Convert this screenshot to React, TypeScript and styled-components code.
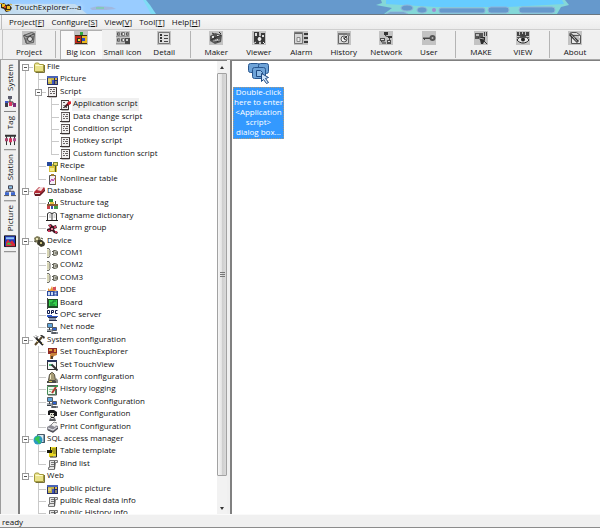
import React from "react";
import styled, { createGlobalStyle, css } from "styled-components";

const GlobalStyle = createGlobalStyle`
  *, *::before, *::after { box-sizing: border-box; }
  html, body { margin: 0; padding: 0; }
  body, button {
    font-family: "Open Sans", "Noto Sans", sans-serif;
    font-size: 8px;
    color: #111;
  }
  button { border: 0; background: none; padding: 0; margin: 0; }
`;

const Window = styled.div`
  display: flex;
  flex-direction: column;
  height: 100vh;
  background: #f0f0f0;
  overflow: hidden;
`;

/* ---------- title bar ---------- */

const TitleBar = styled.header`
  display: grid;
  height: 15px;
  flex: none;
  background: #6699cc;
  border-bottom: 1px solid #6b7780;
  overflow: hidden;
  > * { grid-area: 1 / 1; }
`;

const TitleArt = styled.div`
  display: flex;
  justify-content: space-between;
  min-width: 0;
  padding-right: 30px;
`;

const TitleText = styled.h1`
  display: flex;
  align-items: center;
  gap: 3px;
  margin: 0;
  font-size: 8px;
  font-weight: 400;
  line-height: 14px;
  color: #111;
`;

const TitleGlow = styled.span`
  text-shadow: 0 0 4px #fff, 0 0 6px #e6f4ff;
`;

/* ---------- menu ---------- */

const MenuBar = styled.nav`
  display: flex;
  align-items: center;
  gap: 7px;
  flex: none;
  height: 15px;
  padding-left: 1px;
  background: linear-gradient(#f8f8f8, #ececec);
  border-bottom: 1px solid #cfcfcf;
`;

const Grip = styled.span`
  width: 1px;
  height: 100%;
  background: #bdbdbd;
`;

const MenuItem = styled.button`
  line-height: 14px;
  white-space: nowrap;
`;

/* ---------- toolbar ---------- */

const ToolBar = styled.div`
  display: flex;
  flex: none;
  height: 30px;
  padding: 0 0 0 2px;
  background: #f0f0f0;
  border-bottom: 1px solid #a8a8a8;
`;

const ToolGroup = styled.div<{ $width: number }>`
  display: flex;
  width: ${(p) => p.$width}px;
  flex: none;
`;

const ToolButton = styled.button<{ $active?: boolean }>`
  display: flex;
  flex: 1 1 0;
  min-width: 0;
  flex-direction: column;
  align-items: center;
  justify-content: center;
  gap: 1px;
  line-height: 12px;
  white-space: nowrap;
  ${(p) =>
    p.$active &&
    css`
      background: #f9f9f9;
      box-shadow: inset 1px 1px #b0b0b0;
    `}
`;

const Divider = styled.span`
  width: 10px;
  margin: 1px 0;
  flex: none;
  background: linear-gradient(#b4b4b4, #b4b4b4) 5px 0 / 1px 100% no-repeat;
`;

const ToolStart = styled.span`
  width: 6px;
  border-left: 1px solid #c4c4c4;
  flex: none;
`;

/* ---------- body ---------- */

const Body = styled.main`
  display: flex;
  flex: 1;
  min-height: 0;
`;

const SideTabs = styled.div`
  display: flex;
  flex-direction: column;
  flex: none;
  width: 18px;
  padding: 0 2px 0 3px;
  border-left: 1px solid #9c9c9c;
`;

const SideTab = styled.button`
  display: flex;
  writing-mode: vertical-rl;
  transform: rotate(180deg);
  align-items: center;
  justify-content: flex-end;
  gap: 4px;
  padding: 4px 0;
  line-height: 12px;
  border-top: 1px solid #808080;
  svg { transform: rotate(180deg); }
`;

const TreePanel = styled.section`
  display: flex;
  flex: none;
  width: 209px;
  border: 1px solid #808080;
  border-left-width: 2px;
  border-bottom: 0;
  border-right: 0;
  background: #fff;
`;

const TreeView = styled.div`
  flex: 1;
  min-width: 0;
  overflow-x: hidden;
  overflow-y: auto;
  scrollbar-width: none;
`;

const TreeList = styled.ul`
  display: grid;
  grid-auto-rows: 12px 13px 12px 13px 12px;
  list-style: none;
  margin: 0;
  padding: 0;
`;

const TreeRow = styled.li`
  display: flex;
  align-items: stretch;
  min-width: 0;
`;

const lineV = "linear-gradient(#c9c9c9, #c9c9c9) 5px 0 / 1px 100% no-repeat";
const guides: Record<string, string> = {
  " ": "none",
  "|": lineV,
  "+": `${lineV}, linear-gradient(#c9c9c9, #c9c9c9) 5px 6px / 8px 1px no-repeat`,
  L: "linear-gradient(#c9c9c9, #c9c9c9) 5px 0 / 1px 7px no-repeat, linear-gradient(#c9c9c9, #c9c9c9) 5px 6px / 8px 1px no-repeat",
  r: "linear-gradient(#c9c9c9, #c9c9c9) 5px 6px / 1px 8px no-repeat, linear-gradient(#c9c9c9, #c9c9c9) 5px 6px / 8px 1px no-repeat",
};

const Guide = styled.span<{ $kind: string }>`
  display: flex;
  align-items: center;
  flex: none;
  width: 13px;
  background: ${(p) => guides[p.$kind]};
`;

const Toggle = styled.button`
  width: 7px;
  height: 7px;
  margin-left: 2px;
  border: 1px solid #989898;
  background: linear-gradient(#555, #555) 1px 2px / 3px 1px no-repeat #fff;
`;

const TreeIcon = styled.span`
  display: flex;
  align-items: center;
  justify-content: center;
  flex: none;
  width: 12px;
  margin-right: 1px;
`;

const TreeLabel = styled.span<{ $active?: boolean }>`
  padding: 0 1px;
  line-height: 10px;
  white-space: nowrap;
  background: ${(p) => (p.$active ? "#f0f0f0" : "transparent")};
`;

const ScrollBar = styled.div`
  display: flex;
  flex-direction: column;
  flex: none;
  width: 10px;
  background: #f2f2f2;
`;

const ScrollArrow = styled.button<{ $up?: boolean }>`
  display: flex;
  align-items: center;
  justify-content: center;
  height: 12px;
  flex: none;
  &::after {
    content: "";
    border: 2px solid transparent;
    border-${(p) => (p.$up ? "bottom" : "top")}: 3px solid #333;
    border-${(p) => (p.$up ? "top" : "bottom")}: 0;
  }
`;

const ScrollTrack = styled.div`
  flex: 1;
  min-height: 0;
`;

const ScrollThumb = styled.div`
  display: flex;
  flex-direction: column;
  align-items: center;
  justify-content: center;
  gap: 1px;
  height: 94%;
  border: 1px solid #a2a2a2;
  border-radius: 1px;
  background: linear-gradient(90deg, #f6f6f6, #e4e4e4 45%, #cfcfcf 55%, #dadada);
`;

const ThumbMark = styled.span`
  width: 5px;
  height: 1px;
  background: #777;
`;

const Splitter = styled.div`
  flex: none;
  width: 3px;
  background: #f0f0f0;
`;

const Content = styled.section`
  flex: 1;
  min-width: 0;
  background: #fff;
  border-top: 1px solid #808080;
  border-left: 2px solid #808080;
`;

const Shortcut = styled.button`
  display: flex;
  flex-direction: column;
  align-items: center;
  gap: 2px;
  width: 51px;
  margin-left: 1px;
  padding-top: 1px;
`;

const ShortcutLabel = styled.span`
  width: 100%;
  padding: 0 0 2px;
  line-height: 10px;
  text-align: center;
  color: #fff;
  background: #3399ff;
  outline: 1px dotted #a99a80;
  outline-offset: -1px;
`;

const StatusBar = styled.footer`
  flex: none;
  height: 14px;
  padding-left: 2px;
  line-height: 13px;
  background: #f0f0f0;
  border-top: 1px solid #fafafa;
  border-bottom: 1px solid #8c8c8c;
`;

/* ---------- icons ---------- */

const S = ({ size = 12, children }: { size?: number; children: React.ReactNode }) => (
  <svg width={size} height={size} viewBox={`0 0 ${size} ${size}`} aria-hidden="true">
    {children}
  </svg>
);

const P = ({ d, f = "none", s, w = 1 }: { d: string; f?: string; s?: string; w?: number }) => (
  <path d={d} fill={f} stroke={s} strokeWidth={w} />
);

const icons: Record<string, React.ReactNode> = {
  folder: (
    <S>
      <P d="M1.5 10.5V3.5l1-1.5h3l1 1.5h4v7z" f="#e9e28a" s="#a39a3c" />
      <P d="M2.5 4.5h7" s="#fdfad0" />
      <P d="M11.5 4v7.5h-9" s="#77713a" />
    </S>
  ),
  picture: (
    <S>
      <P d="M1 2h11v9H1z" f="#26306e" />
      <P d="M2 4h6v6H2z" f="#c2b04a" />
      <P d="M1 2h11v2H1z" f="#4a64b8" />
      <P d="M2 5h3v3H2z" f="#e2cf70" />
      <P d="M6 6h2v4H6z" f="#4057c0" />
      <P d="M9 4h2v2H9z" f="#e1b83c" />
      <P d="M9 7h2v3H9z" f="#8e8a70" />
    </S>
  ),
  script: (
    <S>
      <P d="M2.5 1.5h8v9.5h-8z" f="#f2f0f0" s="#8a8484" />
      <P d="M4 3.5h2M7 3.5h2M4 5.5h1M6 5.5h3M4 7.5h2M7 7.5h2" s="#6a6464" />
      <P d="M10.5 1v10M1 10.5h9" s="#3c3434" />
      <P d="M2 1.5h9" s="#5a5252" />
    </S>
  ),
  scriptEdit: (
    <S>
      <P d="M2.5 1.5h7v9.5h-7z" f="#f2f0f0" s="#6a6464" />
      <P d="M4 3.5h2M4 8.5h2M7 8.5h1" s="#555" />
      <P d="M1 10.5h9M2 1.5h8M9.5 6v5" s="#3c3434" />
      <P d="M6 8l4-4" s="#4a1820" w={2} />
      <P d="M9 5l3-2" s="#d9202c" w={3} />
      <P d="M4.5 6l2 2" s="#222" />
    </S>
  ),
  bind: (
    <S>
      <P d="M3.5 2.5h8v2h-2l-1 7h-6v-2h1z" f="#e4e4e4" s="#777" />
      <P d="M5 4.5h4M5 6.5h3M4 8.5h4" s="#777" />
      <P d="M8.5 3v8" s="#555" />
    </S>
  ),
  recipe: (
    <S>
      <P d="M3 3h8v8H3z" f="#d9c43c" />
      <P d="M1 1h5v4H1z" f="#274a9c" />
      <P d="M4 7h4v3H4z" f="#f2ea8a" />
      <P d="M7 1h5v4H7z" f="#7b8634" />
      <P d="M8 2h3v2H8z" f="#e9db5e" />
      <P d="M9.5 5v6" s="#4e5620" />
    </S>
  ),
  nonlinear: (
    <S>
      <P d="M3.5 2.5h6v9h-6z" f="#f6eef6" s="#555" />
      <P d="M5 1h3v2H5z" f="#a67e30" />
      <P d="M4 9l2-3 1 2 2-3" s="#b3329c" />
      <P d="M9.5 3v9" s="#8a6a34" />
    </S>
  ),
  database: (
    <S>
      <P d="M1 7l5-5h5l1 2-5 6H2z" f="#b32a35" />
      <P d="M4 5l3-3h4L8 6z" f="#f3dcdc" />
      <P d="M1 8l6 1 5-5v2l-5 5H2z" f="#651820" />
      <P d="M2 8.5h5" s="#e8cccc" />
    </S>
  ),
  structure: (
    <S>
      <P d="M3 1h4v3H3z" f="#2b8c3a" />
      <P d="M2.5 4v7M9.5 3v8" s="#444" />
      <P d="M1 6h11v2H1z" f="#8a5a34" />
      <P d="M4 4h4v2H4z" f="#e5c440" />
      <P d="M8 8h4v3H8z" f="#3f9c4c" />
      <P d="M1 8h3v3H1z" f="#c9444a" />
      <P d="M5 8h2v3H5z" f="#3a55b0" />
    </S>
  ),
  book: (
    <S>
      <P d="M1.5 3.5l2-1 2.5 1 2.5-1 2 1v7h-9z" f="#fff" s="#333" />
      <P d="M6 3v7" s="#333" />
      <P d="M0 10.5h12" s="#222" />
      <P d="M3 5h2M7.5 5h2M3 7h2M7.5 7h2" s="#aaa" />
    </S>
  ),
  alarmGroup: (
    <S>
      <P d="M2 2l3-1 2 2 3-1 1 3-3 1 1 2 3 1-1 2-3-1-2-2-2 1-3-1v-2l3-1z" f="#3c1722" />
      <P d="M3 2h2v2H3zM8 3h2v2H8zM9 8h2v2H9zM2 7h2v2H2z" f="#c5375b" />
      <P d="M5 5h2v2H5z" f="#e9869c" />
    </S>
  ),
  device: (
    <S>
      <P d="M1 3l3-2 3 1 1 3-3 3-3-1z" f="#807d5a" />
      <P d="M5 5l4 0 3 3-1 3-3 1-4-3z" f="#3b3929" />
      <P d="M3 3h2v2H3z" f="#e9e4b4" />
      <P d="M7 7h2v2H7z" f="#c9c07e" />
      <P d="M1 6l2 1M8 3l2 1M10 9l2 1" s="#4b4838" />
    </S>
  ),
  com: (
    <S>
      <P d="M1 1.5h2l1 2v5l-1 2H1" f="#e4e2cc" s="#70706a" />
      <P d="M2 3v6" s="#c9c79a" />
      <P d="M7.5 3.5h2l2 1v3l-2 1h-2z" f="#b9b9ad" s="#66665c" />
      <P d="M6 4.5h1M6 7.5h1M9 6h3" s="#55554d" />
    </S>
  ),
  dde: (
    <S>
      <P d="M2 3l2 2 2-4 1 3 3-3-1 4 3 1H2z" f="#e9973a" />
      <P d="M7 2h3v3H7z" f="#d6505a" />
      <P d="M1 6h11v5H1z" f="#2e4a9e" />
      <P d="M2.5 7v3h1V7M5.5 7v3h1V7M8.5 7h2M8.5 8.5h2M8.5 10h2" s="#c8daf4" />
    </S>
  ),
  board: (
    <S>
      <P d="M1 2h11v9H2z" f="#1e4f24" />
      <P d="M3 3h8v6H3z" f="#35d04a" />
      <P d="M4 6h3V4h3M4 8h5" s="#15702a" />
      <P d="M1.5 1v11" s="#444" />
    </S>
  ),
  opc: (
    <S>
      <P d="M1.5 1.5h2v3h-2zM5.5 5V1.5h2v2h-2M11.5 1.5h-2v3h2" s="#101b4c" />
      <P d="M1 6h5v2H1zM6 7h6v1H6z" f="#2f58c4" />
      <P d="M3 9h7v2H3z" f="#8a94a8" />
      <P d="M2 8.5h9M3 11.5h8" s="#2b3350" />
    </S>
  ),
  net: (
    <S>
      <P d="M1.5 1.5h5v4h-5z" f="#5da4dc" s="#555d66" />
      <P d="M1 7h6v3H1z" f="#9aa1a8" />
      <P d="M6.5 5.5h4v3h-4z" f="#2f62d0" s="#555d66" />
      <P d="M5 10h7v2H5z" f="#848b93" />
      <P d="M6 11h4" s="#2c3036" />
      <P d="M3.5 6v2M1 9.5h4" s="#3a3f46" />
    </S>
  ),
  tools: (
    <S>
      <P d="M2 11l7-8" s="#5b4a2c" w={2} />
      <P d="M3 4l7 7" s="#222" w={2} />
      <P d="M1 2.5l2 2 2-2M3 1.5l1 1" s="#333" />
      <P d="M7 1h2l3 2-1 2-2-2z" f="#333" />
      <P d="M4 8l1-1M9 9l1 1" s="#e9d68a" />
    </S>
  ),
  setExplorer: (
    <S>
      <P d="M2 1h9v6H2z" f="#8e2b26" />
      <P d="M3 2h3v2H3zM8 2h2v3H8z" f="#e49a3a" />
      <P d="M5 6h6v2l-3 1-2 3H4V8z" f="#c8823a" />
      <P d="M5 9h2v3H5z" f="#57402a" />
    </S>
  ),
  setView: (
    <S>
      <P d="M1.5 1.5h9v9h-9z" f="#f4f8f8" s="#333" />
      <P d="M1 1h10v2H1z" f="#27345c" />
      <P d="M3 5h3v2H3z" f="#4cbf7c" />
      <P d="M5.5 5.5l6 6" s="#333" w={2} />
    </S>
  ),
  bell: (
    <S>
      <P d="M2.5 9.5l1-6 2-2h1l2 2 1 6z" f="#a79d78" s="#555042" />
      <P d="M4.5 4v4" s="#f2ecc8" />
      <P d="M1 10h10v2H1z" f="#4a4a46" />
      <P d="M3 10.5h3" s="#d8c856" />
      <P d="M10 7l2 2v3h-2z" f="#8a8a84" />
    </S>
  ),
  history: (
    <S>
      <P d="M1.5 2.5h8v8h-8z" f="#eef9ee" s="#448a55" />
      <P d="M3 5.5h4M3 7.5h2" s="#8cc79a" />
      <P d="M6 9l4-6" s="#b33a30" w={2} />
      <P d="M9 1h3v2H9z" f="#3f9a4f" />
      <P d="M1 1.5h9" s="#555" />
      <P d="M10.5 5v6H2" s="#555" />
    </S>
  ),
  user: (
    <S>
      <P d="M2 2l2-1h4l3 2v4H9l-1 2H5L4 6H2z" f="#18181a" />
      <P d="M4 4h4v4H6L4 7z" f="#dedfd0" />
      <P d="M3 12l1-3 2 1 3-1 1 3z" f="#5a5d60" />
      <P d="M5.5 5v1M7.5 5v1" s="#333" />
    </S>
  ),
  printer: (
    <S>
      <P d="M1 6l5-3 6 2v3l-5 4-6-3z" f="#8b8b94" />
      <P d="M5 4l3-3 3 1-2 4z" f="#f2f2f2" />
      <P d="M2 7l5 2 4-3" s="#e4e4ea" />
      <P d="M2 9l5 2 5-4" s="#44444c" />
      <P d="M5 4l3-3 3 1" s="#888" />
    </S>
  ),
  sql: (
    <S>
      <P d="M4.5 1.5h7v8h-7z" f="#dfe8ee" s="#4c5c68" />
      <circle cx="5" cy="7" r="4.5" fill="#2a9ac0" />
      <P d="M2 5l3-2 2 1-1 3 2 2-2 2-2-3-2-1z" f="#35c452" />
      <P d="M11 2v8" s="#27506c" />
    </S>
  ),
  template: (
    <S>
      <P d="M5 1h6v9H5z" f="#eadb2e" />
      <P d="M1 4h5v3H1z" f="#1c1c10" />
      <P d="M3 7h4v4H3z" f="#e6d320" />
      <P d="M6 3h4M6 5h4M7 7h3" s="#6a6212" />
      <P d="M10.5 1v10H4M4.5 1v4" s="#26240a" />
    </S>
  ),
  nodes: (
    <S>
      <P d="M6 3v4M3 7h6M3 7v3M9 7v3" s="#333" />
      <P d="M4 1h4v3H4z" f="#5a5a6c" />
      <P d="M1 6h3v2H1z" f="#3b53c4" />
      <P d="M1 8h3v4H1z" f="#3e3e48" />
      <P d="M5 7h3v4H5z" f="#d8345c" />
      <P d="M9 8h3v4H9z" f="#7a2a78" />
    </S>
  ),
  tag: (
    <S>
      <P d="M1 2.5h11" s="#333" w={2} />
      <P d="M2.5 3v9M6.5 3v9M10.5 3v9" s="#333" />
      <P d="M1 5h3v3H1z" f="#a8436c" />
      <P d="M5 5h3v4H5z" f="#d8345c" />
      <P d="M9 5h3v3H9z" f="#b04c8c" />
    </S>
  ),
  station: (
    <S>
      <P d="M4.5 1.5h4v3h-4z" f="#8cc4e8" s="#445" />
      <P d="M6 5v2M2 9V7h8v2" s="#445" />
      <P d="M1 8h4v3H1zM7 8h4v3H7z" f="#3e68d0" />
      <P d="M0 11.5h5M7 11.5h5" s="#333" />
    </S>
  ),
  photo: (
    <S>
      <P d="M.5.5h11v11H.5z" f="#2438b8" s="#111" />
      <P d="M2 7l2-3 2 3 2-2 3 4v2H2z" f="#d82c3c" />
      <P d="M2 9l3-2 3 3z" f="#38c048" />
      <P d="M2 2h8v2H2z" f="#8cc4f8" />
    </S>
  ),
  app: (
    <S>
      <P d="M1 3l3-1 2 2 3-1 3 4-2 3-4 1-2-3-3-1z" f="#3b2a12" />
      <P d="M2 3h3v3H2zM7 5h3v3H7z" f="#f0c020" />
      <P d="M4 5h2v2H4z" f="#d84a20" />
      <P d="M0 2.5h2M6 9.5h4M10 3l2 1" s="#d8a820" />
    </S>
  ),
};

const Bg = () => <P d="M0 0h14v14H0z" f="#c3c3c3" />;

const toolIcons: Record<string, React.ReactNode> = {
  Project: (
    <S size={14}>
      <Bg />
      <P d="M1.5 4.5l8-3 3 1-1 9-7 1z" f="#a8a8a8" s="#5c5c5c" />
      <P d="M2 4l3 2 7-3" s="#444" />
      <circle cx="8" cy="8" r="2.5" fill="#ddd" stroke="#3c3c3c" />
      <P d="M4 7v5M11 5v4" s="#555" />
    </S>
  ),
  "Big icon": (
    <S size={14}>
      <Bg />
      <P d="M1 4h6v9H1z" f="#c0281c" />
      <P d="M7 4h6v9H7z" f="#e8b820" />
      <P d="M6 1h3v3H6z" f="#2ea83a" />
      <P d="M3 7h3v4H3z" f="#2c2c2c" />
      <P d="M4 8h2v2H4z" f="#f0d838" />
      <P d="M8 7h3v3H8z" f="#2c48c0" />
      <P d="M7.5 4v9M1 12.5h12M1 4.5h12" s="#402c14" />
    </S>
  ),
  "Small icon": (
    <S size={14}>
      <Bg />
      <P d="M1.5 1.5h2v3h-2zM5.5 1.5h3v3h-3zM10.5 1.5h2v3h-2zM1.5 7.5h2v3h-2zM5.5 7.5h3v3h-3z" f="#eee" s="#777" />
      <P d="M1 3h2M5 3h2M10 3h2M1 9h2M5 9h2" s="#333" />
      <P d="M9 7h5v6H9z" f="#4a4a4a" />
      <P d="M10 8h2v2h-2z" f="#ccc" />
      <P d="M0 12.5h9M0 5.5h13" s="#999" />
    </S>
  ),
  Detail: (
    <S size={14}>
      <Bg />
      <P d="M1.5 1.5h11v11h-11z" f="#dedede" s="#777" />
      <P d="M3 3h2v2H3zM3 6h2v2H3zM3 9h2v2H3z" f="#333" />
      <P d="M7 4.5h4M7 7.5h4M7 10.5h4" s="#444" />
    </S>
  ),
  Maker: (
    <S size={14}>
      <Bg />
      <P d="M1 5l5-3 7 2-1 7-6 2-5-3z" f="#555" />
      <P d="M3 5h2v2H3zM8 4h3v1H8zM6 8h3v2H6z" f="#e4e4e4" />
      <P d="M2 9l10-5M3 2l2 1M10 1l2 2M5 6l4 5" s="#2e2e2e" />
      <P d="M4 10l7-1" s="#aaa" />
    </S>
  ),
  Viewer: (
    <S size={14}>
      <Bg />
      <P d="M2 1h5v12H2zM9 2h4v11H9z" f="#3a3a3a" />
      <P d="M3 2h2v3H3zM10 4h2v2h-2z" f="#ddd" />
      <circle cx="7.5" cy="8" r="2.5" fill="#eee" stroke="#222" />
      <P d="M4 11l-3 2M11 11l2 2" s="#eee" />
    </S>
  ),
  Alarm: (
    <S size={14}>
      <Bg />
      <P d="M.5 1.5h8v11h-8z" f="#d6d6d6" s="#777" />
      <P d="M1 2.5h7" s="#666" />
      <P d="M3 6.5h3v4H3z" f="#eee" s="#888" />
      <P d="M10 2h4v2h-4zM10 6h4v2h-4zM10 10h4v2h-4z" f="#3a3a3a" />
    </S>
  ),
  History: (
    <S size={14}>
      <Bg />
      <P d="M1.5 2.5h10v10h-10z" f="#dadada" s="#666" />
      <P d="M1 2h11v2H1z" f="#777" />
      <circle cx="7" cy="8" r="3" fill="#f2f2f2" stroke="#555" />
      <P d="M7 8l5-5M7 6v2l2 1" s="#333" />
      <P d="M10 2h3v3h-3z" f="#8a8a8a" />
    </S>
  ),
  Network: (
    <S size={14}>
      <Bg />
      <P d="M6.5 1v4l4 1v3M2.5 8v3h3" s="#444" />
      <P d="M5 1h4v3H5zM9 5h4v2H9z" f="#333" />
      <P d="M1 7h5v3H1zM8 9h4v4H8z" f="#4e4e4e" />
      <P d="M3 11h4v2H3z" f="#777" />
      <P d="M2 8h3v1H2zM9 10h2v1H9z" f="#ddd" />
    </S>
  ),
  User: (
    <S size={14}>
      <Bg />
      <P d="M1 7.5h7M2.5 7v2" s="#444" />
      <P d="M1 6.5h7" s="#888" />
      <circle cx="10.5" cy="7" r="2" fill="#b8b8b8" stroke="#555" strokeWidth="2" />
    </S>
  ),
  MAKE: (
    <S size={14}>
      <Bg />
      <P d="M1 2h8v6H1z" f="#555" />
      <P d="M2 3h3v2H2z" f="#bbb" />
      <P d="M4 6h7v3L9 13H7L6 9z" f="#2f2f2f" />
      <P d="M10.5 1v4M12.5 1v4" s="#444" />
      <P d="M5 7l5 1" s="#aaa" />
      <P d="M10 10l3 3" s="#333" />
    </S>
  ),
  VIEW: (
    <S size={14}>
      <Bg />
      <P d="M1 1h12v4H1z" f="#444" />
      <P d="M3.5 1v3M6.5 1v2M9.5 1v3" s="#bbb" />
      <P d="M1 9c3-5 9-5 12 0-3 4-9 4-12 0z" f="#e6e6e6" s="#222" />
      <circle cx="7" cy="8.5" r="2" fill="#222" />
      <P d="M1 6.5h12" s="#555" />
    </S>
  ),
  About: (
    <S size={14}>
      <Bg />
      <P d="M3.5 4.5h9v8h-9z" f="#e9e9e9" s="#555" />
      <P d="M1.5 2.5l2-1h5l4 3" f="#ddd" s="#555" />
      <P d="M2 3l8 8" s="#333" w={3} />
      <P d="M3 3.5l6 7" s="#bbb" />
      <P d="M6 6h5M9 8h3" s="#999" />
    </S>
  ),
};

const CopyWindowsIcon = () => (
  <svg width="24" height="23" viewBox="0 0 24 23" aria-hidden="true">
    <g fill="#6ea3d8" stroke="#28568f">
      <rect x="1.5" y="1.5" width="11" height="9" rx="2" />
      <rect x="11.5" y="1.5" width="10" height="10" rx="2" />
      <rect x="5.5" y="5.5" width="13" height="11" rx="2" />
    </g>
    <path d="M9.5 8.5h4l2 2v4h-6z" fill="#8fbde8" stroke="#1f4a82" />
    <path d="M14.5 11.5l7 4-3 1 3 4-2 1-3-4-2 2z" fill="#cfe4fa" stroke="#1f4a82" />
  </svg>
);

const TitleLeftArt = () => (
  <svg width="157" height="14" viewBox="0 0 157 14" aria-hidden="true">
    <path d="M0 0h146l4 5 6 9H0z" fill="#7fdcf4" />
    <path d="M0 0h143l3 5 5 9H0z" fill="#99ccff" />
    <path d="M0 4h75l12 10H0z" fill="#c2dcf0" />
    <path d="M90 8l8-2 14 1 4 2-10 1-14 0z" fill="#a0b8e0" />
    <path d="M96 7h8v2h-8z" fill="#84c8b8" />
  </svg>
);

const TitleRightArt = () => (
  <svg width="194" height="14" viewBox="0 0 194 14" aria-hidden="true">
    <path d="M5 0h184l4 5-8 2-4 7H8l8-6-16-3 6-2z" fill="#84d8d8" />
    <path d="M10 0h176l2 4-58 3H60L10 4z" fill="#66ccff" />
    <g fill="#6699cc" stroke="#8fb4d8">
      <ellipse cx="31" cy="8" rx="6" ry="3" />
      <ellipse cx="46" cy="10" rx="5" ry="3" />
      <rect x="63" y="8" width="46" height="5" rx="2" />
      <rect x="112" y="7" width="21" height="6" rx="3" />
      <rect x="143" y="7" width="36" height="6" rx="3" />
      <path d="M10 14l4-2h14l4 2z" />
    </g>
    <circle cx="58" cy="10" r="2" fill="#a08cd0" />
  </svg>
);

/* ---------- data ---------- */

const menus: [string, string][] = [
  ["Project", "F"],
  ["Configure", "S"],
  ["View", "V"],
  ["Tool", "T"],
  ["Help", "H"],
];

const toolGroups: { width: number; items: string[] }[] = [
  { width: 42, items: ["Project"] },
  { width: 125, items: ["Big icon", "Small icon", "Detail"] },
  { width: 255, items: ["Maker", "Viewer", "Alarm", "History", "Network", "User"] },
  { width: 84, items: ["MAKE", "VIEW"] },
  { width: 42, items: ["About"] },
];

const sideTabs: [string, string][] = [
  ["System", "nodes"],
  ["Tag", "tag"],
  ["Station", "station"],
  ["Picture", "photo"],
];

/* guides, icon, label; the last guide of a parent row carries its toggle */
const tree: [string, string, string, boolean?][] = [
  ["r", "folder", "File", true],
  ["|+", "picture", "Picture"],
  ["|+", "script", "Script", true],
  ["||+", "scriptEdit", "Application script"],
  ["||+", "script", "Data change script"],
  ["||+", "script", "Condition script"],
  ["||+", "script", "Hotkey script"],
  ["||L", "script", "Custom function script"],
  ["|+", "recipe", "Recipe"],
  ["|L", "nonlinear", "Nonlinear table"],
  ["+", "database", "Database", true],
  ["|+", "structure", "Structure tag"],
  ["|+", "book", "Tagname dictionary"],
  ["|L", "alarmGroup", "Alarm group"],
  ["+", "device", "Device", true],
  ["|+", "com", "COM1"],
  ["|+", "com", "COM2"],
  ["|+", "com", "COM3"],
  ["|+", "dde", "DDE"],
  ["|+", "board", "Board"],
  ["|+", "opc", "OPC server"],
  ["|L", "net", "Net node"],
  ["+", "tools", "System configuration", true],
  ["|+", "setExplorer", "Set TouchExplorer"],
  ["|+", "setView", "Set TouchView"],
  ["|+", "bell", "Alarm configuration"],
  ["|+", "history", "History logging"],
  ["|+", "net", "Network Configuration"],
  ["|+", "user", "User Configuration"],
  ["|L", "printer", "Print Configuration"],
  ["+", "sql", "SQL access manager", true],
  ["|+", "template", "Table template"],
  ["|L", "bind", "Bind list"],
  ["L", "folder", "Web", true],
  [" +", "picture", "public picture"],
  [" +", "bind", "pulbic Real data info"],
  [" +", "bind", "public History info"],
];

export default function App() {
  return (
    <Window>
      <GlobalStyle />
      <TitleBar>
        <TitleArt>
          <TitleLeftArt />
          <TitleRightArt />
        </TitleArt>
        <TitleText>
          {icons.app}
          <TitleGlow>TouchExplorer---a</TitleGlow>
        </TitleText>
      </TitleBar>

      <MenuBar>
        <Grip />
        {menus.map(([name, key]) => (
          <MenuItem key={name}>
            {name}[<u>{key}</u>]
          </MenuItem>
        ))}
      </MenuBar>

      <ToolBar>
        <ToolStart />
        {toolGroups.map((group, i) => (
          <React.Fragment key={i}>
            {i > 0 && <Divider />}
            <ToolGroup $width={group.width}>
              {group.items.map((name) => (
                <ToolButton key={name} $active={name === "Big icon"}>
                  {toolIcons[name]}
                  {name}
                </ToolButton>
              ))}
            </ToolGroup>
          </React.Fragment>
        ))}
      </ToolBar>

      <Body>
        <SideTabs>
          {sideTabs.map(([name, icon]) => (
            <SideTab key={name}>
              {icons[icon]}
              {name}
            </SideTab>
          ))}
        </SideTabs>
        <TreePanel>
          <TreeView>
            <TreeList>
              {tree.map(([lines, icon, label, parent]) => (
                <TreeRow key={label}>
                  {lines.split("").map((kind, i) => (
                    <Guide key={i} $kind={kind}>
                      {parent && i === lines.length - 1 && <Toggle aria-label={`Collapse ${label}`} />}
                    </Guide>
                  ))}
                  <TreeIcon>{icons[icon]}</TreeIcon>
                  <TreeLabel $active={label === "Application script"}>{label}</TreeLabel>
                </TreeRow>
              ))}
            </TreeList>
          </TreeView>
          <ScrollBar>
            <ScrollArrow $up aria-label="Scroll up" />
            <ScrollTrack>
              <ScrollThumb>
                <ThumbMark />
                <ThumbMark />
                <ThumbMark />
              </ScrollThumb>
            </ScrollTrack>
            <ScrollArrow aria-label="Scroll down" />
          </ScrollBar>
        </TreePanel>
        <Splitter />
        <Content>
          <Shortcut>
            <CopyWindowsIcon />
            <ShortcutLabel>Double-click here to enter &lt;Application script&gt; dialog&nbsp;box...</ShortcutLabel>
          </Shortcut>
        </Content>
      </Body>

      <StatusBar>ready</StatusBar>
    </Window>
  );
}
